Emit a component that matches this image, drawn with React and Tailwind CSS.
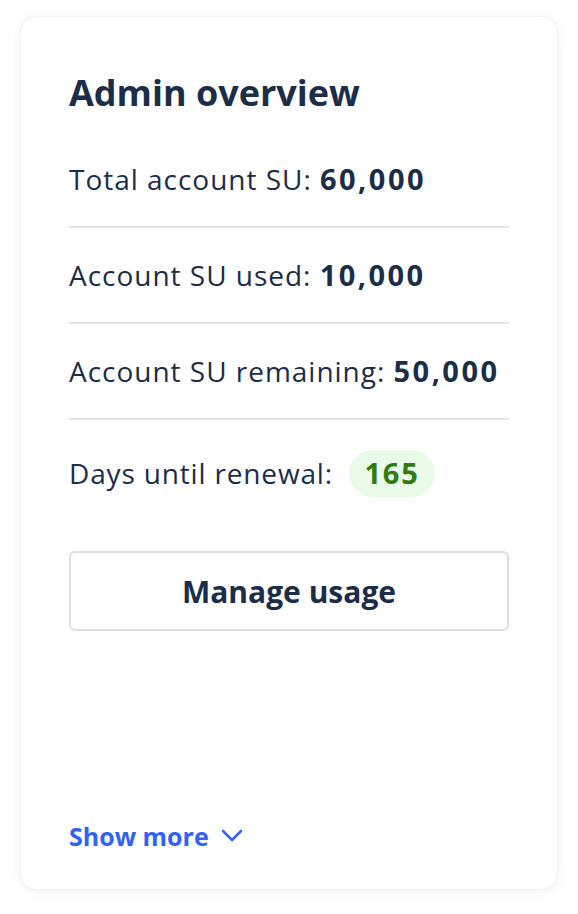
import React from "react";

function Row({ label, value }) {
  return (
    <div className="flex items-center h-[96px] border-b-2 border-[#e1e4e8]">
      <span className="text-[28px] leading-[32px] tracking-[0.035em] text-[#1c2d4a]">
        {label} <span className="font-bold text-[29px] tracking-[0.085em]">{value}</span>
      </span>
    </div>
  );
}

export default function App() {
  return (
    <div className="min-h-[914px] w-[578px] bg-white pt-4 px-5" style={{ fontFamily: "'Open Sans', 'Noto Sans', sans-serif" }}>
      <div className="h-[874px] w-[538px] rounded-2xl bg-white shadow-[0_2px_12px_rgba(0,0,0,0.06)] border border-[#f2f3f5] px-12 flex flex-col">
        <h2 className="mt-[56px] text-[36px] leading-[40px] font-bold text-[#1c2d4a]">Admin overview</h2>
        <div className="mt-[19px]">
          <Row label="Total account SU:" value="60,000" />
          <Row label="Account SU used:" value="10,000" />
          <Row label="Account SU remaining:" value="50,000" />
        </div>
        <div className="flex items-center h-[106px]">
          <span className="text-[28px] leading-[32px] tracking-[0.03em] text-[#1c2d4a]">Days until renewal:</span>
          <span className="ml-[16px] h-[47px] w-[86px] rounded-full bg-[#eafbea] text-[#2f7d0f] font-bold text-[29px] tracking-[0.06em] flex items-center justify-center">165</span>
        </div>
        <button className="mt-[25px] h-[80px] w-full rounded-md border-2 border-[#dcdfe4] bg-white text-[30px] font-bold text-[#1c2d4a]">
          Manage usage
        </button>
        <div className="mt-auto mb-[37px] flex items-center gap-3 text-[#3162f5] font-bold text-[25px] leading-[32px]">
          <span>Show more</span>
          <svg width="22" height="14" viewBox="0 0 22 14" fill="none" stroke="currentColor" strokeWidth="2.5" strokeLinecap="round" strokeLinejoin="round">
            <path d="M2 2 L11 11 L20 2" />
          </svg>
        </div>
      </div>
    </div>
  );
}
